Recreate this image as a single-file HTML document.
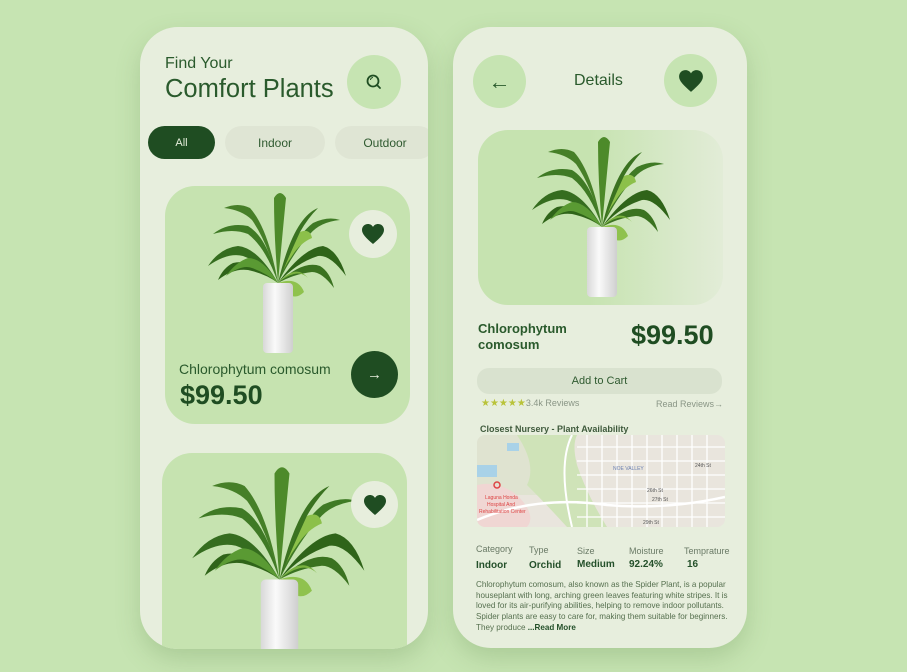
<!DOCTYPE html>
<html><head><meta charset="utf-8">
<style>
*{margin:0;padding:0;box-sizing:border-box}
body{width:907px;height:672px;background:#c6e4b2;font-family:"Liberation Sans",sans-serif;position:relative;overflow:hidden}
.ph{position:absolute;background:#e7eedd;border-radius:38px;box-shadow:0 10px 24px rgba(90,130,70,.25);overflow:hidden}
.a{position:absolute}
.dg{color:#2a5a2c}
.circ{position:absolute;border-radius:50%;display:flex;align-items:center;justify-content:center}
.pill{position:absolute;border-radius:17px;display:flex;align-items:center;justify-content:center;font-size:12px;color:#2f5a30;background:#dfe5d4}
.lab{font-size:9px;color:#6a7a66}
.val{font-size:10px;font-weight:bold;color:#24502a}
</style></head><body>
<svg width="0" height="0" style="position:absolute">
<defs>
<linearGradient id="vg" x1="0" x2="1"><stop offset="0" stop-color="#d8d8d8"/><stop offset=".4" stop-color="#fafafa"/><stop offset="1" stop-color="#cfcfcf"/></linearGradient>
<g id="plant">
<g fill="#3f7a25">
<path d="M70 95 Q60 50 40 38 Q20 34 5 46 Q25 40 40 46 Q58 60 70 95Z"/>
<path d="M70 95 Q50 60 30 58 Q12 60 0 78 Q20 64 35 68 Q55 75 70 95Z" fill="#356d1f"/>
<path d="M70 95 Q45 70 25 75 Q15 80 10 92 Q25 80 40 82 Q58 86 70 95Z" fill="#2f6419"/>
<path d="M70 95 Q75 40 78 10 Q72 0 66 10 Q66 50 70 95Z" fill="#4d8a2a"/>
<path d="M70 95 Q85 50 105 35 Q120 28 132 32 Q112 34 102 46 Q85 65 70 95Z"/>
<path d="M70 95 Q95 60 115 58 Q130 62 138 88 Q122 66 110 68 Q88 75 70 95Z" fill="#2f6419"/>
<path d="M70 95 Q95 72 112 78 Q122 84 126 100 Q114 84 104 84 Q86 86 70 95Z" fill="#3a7220"/>
<path d="M70 95 Q55 70 40 70 Q28 74 18 88 Q34 76 44 80 Q58 85 70 95Z" fill="#5a9a33"/>
<path d="M70 95 Q60 40 42 20 Q30 14 16 20 Q34 22 44 32 Q60 55 70 95Z" fill="#467f28"/>
<path d="M70 95 Q80 60 92 44 Q102 40 104 50 Q92 55 84 68 Q75 80 70 95Z" fill="#8cc04a"/>
<path d="M70 95 Q88 75 100 90 Q94 84 86 86 Q78 88 70 95Z" fill="#7ab23f"/>
<path d="M70 95 Q90 88 96 104 Q90 110 84 108 Q80 96 70 95Z" fill="#8fc24e"/>
<path d="M70 95 Q85 30 110 20 Q100 30 92 44 Q80 70 70 95Z" fill="#3a7220"/>
</g>
<rect x="55" y="95" width="30" height="70" rx="4" fill="url(#vg)"/>
</g>
<path id="heart" d="M12 21 C5 15 1 11 1 7 C1 3.5 3.5 1 7 1 C9 1 11 2 12 4 C13 2 15 1 17 1 C20.5 1 23 3.5 23 7 C23 11 19 15 12 21Z" fill="#1f4d22"/>
</defs></svg>

<!-- LEFT PHONE -->
<div class="ph" style="left:140px;top:27px;width:288px;height:622px">
 <div class="a dg" style="left:25px;top:28px;font-size:16px">Find Your</div>
 <div class="a dg" style="left:25px;top:48px;font-size:25.5px">Comfort Plants</div>
 <div class="circ" style="left:207px;top:28px;width:54px;height:54px;background:#c6e4b2">
  <svg width="18" height="18" viewBox="0 0 18 18"><circle cx="8" cy="8" r="5.5" fill="none" stroke="#1f4d22" stroke-width="1.8"/><path d="M12 12l3 3" stroke="#1f4d22" stroke-width="1.8" stroke-linecap="round"/><path d="M5.5 7a2.5 2.5 0 0 1 2.5-2.5" stroke="#1f4d22" stroke-width="1" fill="none"/></svg>
 </div>
 <div class="pill" style="left:8px;top:99px;width:67px;height:33px;background:#1f4d22;color:#e6eedc;font-size:11px">All</div>
 <div class="pill" style="left:85px;top:99px;width:100px;height:33px">Indoor</div>
 <div class="pill" style="left:195px;top:99px;width:100px;height:33px">Outdoor</div>
 <div class="a" style="left:25px;top:159px;width:245px;height:238px;background:#c6e3b0;border-radius:30px"></div>
 <svg class="a" style="left:68px;top:161px" width="140" height="170" viewBox="0 0 140 170"><use href="#plant"/></svg>
 <div class="circ" style="left:209px;top:183px;width:48px;height:48px;background:#e7eedd"><svg width="24" height="22" viewBox="0 0 24 22"><use href="#heart"/></svg></div>
 <div class="a dg" style="left:39px;top:334px;font-size:14px">Chlorophytum comosum</div>
 <div class="a" style="left:40px;top:353px;font-size:27px;font-weight:bold;color:#1f4d22">$99.50</div>
 <div class="circ" style="left:211px;top:324px;width:47px;height:47px;background:#1f4d22;color:#e6eedc;font-size:15px">→</div>
 <div class="a" style="left:22px;top:426px;width:245px;height:240px;background:#c6e3b0;border-radius:30px"></div>
 <svg class="a" style="left:52px;top:434px" width="175" height="212" viewBox="0 0 140 170"><use href="#plant"/></svg>
 <div class="circ" style="left:211px;top:454px;width:47px;height:47px;background:#e7eedd"><svg width="24" height="22" viewBox="0 0 24 22"><use href="#heart"/></svg></div>
</div>

<!-- RIGHT PHONE -->
<div class="ph" style="left:453px;top:27px;width:294px;height:621px">
 <div class="circ" style="left:20px;top:28px;width:53px;height:53px;background:#c6e4b2;color:#2a5a2c;font-size:22px">←</div>
 <div class="a dg" style="left:121px;top:45px;font-size:16px">Details</div>
 <div class="circ" style="left:211px;top:27px;width:53px;height:53px;background:#c6e4b2"><svg width="26" height="24" viewBox="0 0 24 22"><use href="#heart"/></svg></div>
 <div class="a" style="left:25px;top:103px;width:245px;height:175px;border-radius:30px;background:linear-gradient(90deg,#c6e3b0 45%,#e2ecd7 100%)"></div>
 <svg class="a" style="left:79px;top:105px" width="140" height="170" viewBox="0 0 140 170"><use href="#plant"/></svg>
 <div class="a dg" style="left:25px;top:294px;font-size:13px;font-weight:bold;line-height:16px;color:#2a5a2c">Chlorophytum<br>comosum</div>
 <div class="a" style="left:178px;top:293px;font-size:27px;font-weight:bold;color:#1f4d22">$99.50</div>
 <div class="a" style="left:24px;top:341px;width:245px;height:26px;border-radius:12px;background:#d9e2cf;display:flex;align-items:center;justify-content:center;font-size:11px;color:#2f5a30">Add to Cart</div>
 <div class="a" style="left:28px;top:371px;font-size:9px;color:#8a9686"><span style="color:#b9c33a;font-size:10px">★★★★★</span>3.4k Reviews</div>
 <div class="a" style="left:203px;top:372px;font-size:9px;color:#8a9686">Read Reviews→</div>
 <div class="a" style="left:27px;top:397px;font-size:9px;font-weight:bold;color:#3f5a3c">Closest Nursery - Plant Availability</div>
 <svg class="a" style="left:24px;top:408px;border-radius:8px" width="248" height="92" viewBox="0 0 248 92">
  <rect width="248" height="92" fill="#e9e5dd"/>
  <path d="M0 0h70v60H0z" fill="#dfe3d0"/>
  <path d="M40 0 Q60 30 50 50 Q70 70 90 92 H130 Q110 60 100 30 Q95 10 100 0Z" fill="#cfe3b8"/>
  <path d="M0 30h20v12H0z M30 8h12v8H30z" fill="#a9d2e8"/>
  <path d="M0 50 Q20 45 40 60 Q60 80 50 92 H0Z" fill="#f0d6d3"/>
  <g stroke="#fff" stroke-width="1.3" fill="none">
   <path d="M110 0V92M125 0V92M140 0V92M155 0V92M170 0V92M185 0V92M200 0V92M215 0V92M230 0V92"/>
   <path d="M100 12H248M100 26H248M100 40H248M100 54H248M100 68H248M100 82H248"/>
   <path d="M0 85 Q60 60 130 70 Q190 75 248 62" stroke-width="2.5"/>
   <path d="M95 0 Q80 30 95 92" stroke-width="2"/>
  </g>
  <circle cx="20" cy="50" r="3" fill="none" stroke="#d44" stroke-width="1.5"/>
  <text x="8" y="64" font-size="5" fill="#d44" font-family="Liberation Sans">Laguna Honda</text>
  <text x="10" y="71" font-size="5" fill="#d44" font-family="Liberation Sans">Hospital And</text>
  <text x="2" y="78" font-size="5" fill="#d44" font-family="Liberation Sans">Rehabilitation Center</text>
  <text x="136" y="35" font-size="5" fill="#6a7fb0" font-family="Liberation Sans">NOE VALLEY</text>
  <text x="218" y="32" font-size="5" fill="#555" font-family="Liberation Sans">24th St</text>
  <text x="170" y="57" font-size="5" fill="#555" font-family="Liberation Sans">26th St</text>
  <text x="175" y="66" font-size="5" fill="#555" font-family="Liberation Sans">27th St</text>
  <text x="166" y="89" font-size="5" fill="#555" font-family="Liberation Sans">29th St</text>
 </svg>
 <div class="a lab" style="left:23px;top:517px">Category</div>
 <div class="a lab" style="left:76px;top:518px">Type</div>
 <div class="a lab" style="left:124px;top:519px">Size</div>
 <div class="a lab" style="left:176px;top:519px">Moisture</div>
 <div class="a lab" style="left:231px;top:519px">Temprature</div>
 <div class="a val" style="left:23px;top:533px">Indoor</div>
 <div class="a val" style="left:76px;top:533px">Orchid</div>
 <div class="a val" style="left:124px;top:532px">Medium</div>
 <div class="a val" style="left:176px;top:532px">92.24%</div>
 <div class="a val" style="left:234px;top:532px">16</div>
 <div class="a" style="left:23px;top:553px;width:266px;font-size:8.1px;line-height:10.7px;color:#56704f">Chlorophytum comosum, also known as the Spider Plant, is a popular houseplant with long, arching green leaves featuring white stripes. It is loved for its air-purifying abilities, helping to remove indoor pollutants. Spider plants are easy to care for, making them suitable for beginners. They produce <b style="color:#24502a">...Read More</b></div>
</div>
</body></html>
